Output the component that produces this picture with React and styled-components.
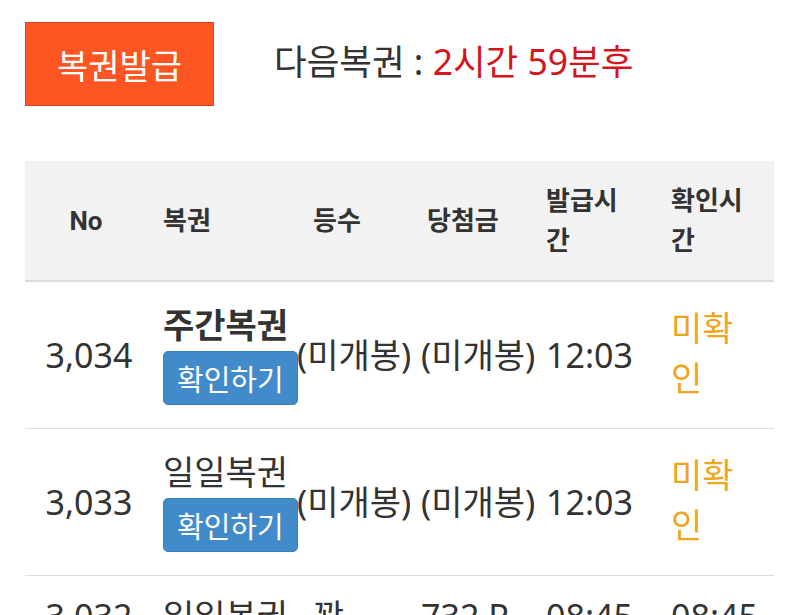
import React from "react";
import styled, { createGlobalStyle } from "styled-components";

const Global = createGlobalStyle`
  html, body { margin: 0; padding: 0; background: #fff; }
  body { font-family: "Noto Sans", "Noto Sans CJK KR", sans-serif; color: #333; }
`;

const Page = styled.div`
  width: 800px;
  box-sizing: border-box;
  padding: 22px 26px 0 25px;
`;

const TopBar = styled.div`
  display: flex;
  align-items: center;
  gap: 60px;
`;

const IssueButton = styled.button`
  width: 189px;
  height: 84px;
  box-sizing: border-box;
  background: #fe5622;
  border: 1px solid #d9481c;
  color: #fff;
  font-family: inherit;
  font-size: 34px;
  padding: 0;
`;

const NextInfo = styled.div`
  font-size: 35.5px;
  color: #333;
  margin-top: -10px;
  white-space: nowrap;
`;

const Remain = styled.span`
  color: #d2161c;
`;

const Table = styled.div`
  margin-top: 55px;
`;

const COLS = "122px 150px 124px 125px 125px 103px";

const HeadRow = styled.div`
  display: grid;
  grid-template-columns: ${COLS};
  align-items: center;
  height: 119px;
  background: #f2f2f2;
  border-bottom: 2px solid #dcdcdc;
`;

const HeadCell = styled.div`
  font-family: Roboto, "Noto Sans CJK KR", sans-serif;
  font-size: 26px;
  font-weight: 700;
  line-height: 40px;
  color: #333;
  text-align: ${(p) => (p.$center ? "center" : "left")};
  padding-left: ${(p) => p.$pl || 0}px;
  padding-right: ${(p) => p.$pr || 0}px;
`;

const Row = styled.div`
  display: grid;
  grid-template-columns: ${COLS};
  align-items: center;
  box-sizing: border-box;
  height: ${(p) => (p.$h ? `${p.$h}px` : "auto")};
  padding-top: ${(p) => p.$pt || 0}px;
  border-bottom: 1px solid #dddddd;
`;

const Cell = styled.div`
  font-size: 34px;
  line-height: 40px;
  color: ${(p) => p.$color || "#333"};
  text-align: ${(p) => (p.$center ? "center" : "left")};
  padding-left: ${(p) => p.$pl || 0}px;
  padding-right: ${(p) => p.$pr || 0}px;
  white-space: ${(p) => (p.$nowrap ? "nowrap" : "normal")};
`;

const StatusCell = styled(Cell)`
  line-height: 50px;
  margin-top: -4px;
`;

const NameStack = styled.div`
  display: flex;
  flex-direction: column;
  align-items: flex-start;
  gap: 6px;
  padding-left: 16px;
`;

const Name = styled.div`
  font-size: 34px;
  line-height: 40px;
  font-weight: ${(p) => (p.$bold ? 700 : 400)};
  white-space: nowrap;
`;

const CheckButton = styled.button`
  height: 54px;
  box-sizing: border-box;
  padding: 0 13px;
  background: #428bca;
  border: 1px solid #3a7fbd;
  border-radius: 5px;
  color: #fff;
  font-family: inherit;
  font-size: 29px;
  white-space: nowrap;
  margin-right: -2px;
`;

const rows = [
  { no: "3,034", name: "주간복권", bold: true },
  { no: "3,033", name: "일일복권", bold: false },
];

export default function App() {
  return (
    <>
      <Global />
      <Page>
        <TopBar>
          <IssueButton>복권발급</IssueButton>
          <NextInfo>
            다음복권 : <Remain>2시간 59분후</Remain>
          </NextInfo>
        </TopBar>
        <Table>
          <HeadRow>
            <HeadCell $center>No</HeadCell>
            <HeadCell $pl={16}>복권</HeadCell>
            <HeadCell $pl={16}>등수</HeadCell>
            <HeadCell $pl={6}>당첨금</HeadCell>
            <HeadCell $pr={40}>발급시간</HeadCell>
            <HeadCell $pr={20}>확인시간</HeadCell>
          </HeadRow>
          {rows.map((r) => (
            <Row key={r.no} $h={147}>
              <Cell $center $pl={6}>{r.no}</Cell>
              <NameStack>
                <Name $bold={r.bold}>{r.name}</Name>
                <CheckButton>확인하기</CheckButton>
              </NameStack>
              <Cell $nowrap>(미개봉)</Cell>
              <Cell $nowrap>(미개봉)</Cell>
              <Cell $nowrap>12:03</Cell>
              <StatusCell $color="#efa51c" $pr={20}>미확인</StatusCell>
            </Row>
          ))}
          <Row $pt={20}>
            <Cell $center $pl={6}>3,032</Cell>
            <Cell $pl={16} $nowrap>일일복권</Cell>
            <Cell $pl={16}>꽝</Cell>
            <Cell $nowrap>732 P</Cell>
            <Cell $nowrap>08:45</Cell>
            <Cell $nowrap>08:45</Cell>
          </Row>
        </Table>
      </Page>
    </>
  );
}
